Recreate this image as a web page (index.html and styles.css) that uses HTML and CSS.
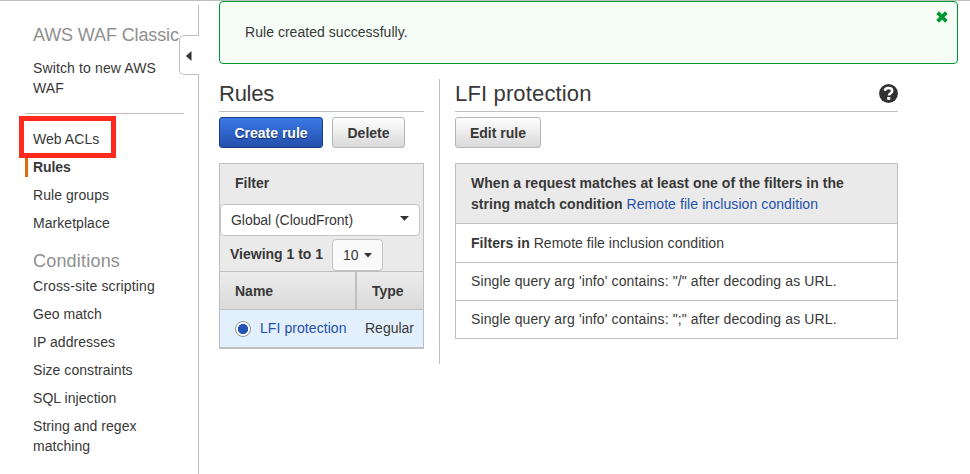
FILE: index.html
```html
<!DOCTYPE html>
<html lang="en">
<head>
<meta charset="utf-8">
<title>AWS WAF Classic - Rules</title>
<link rel="stylesheet" href="styles.css">
</head>
<body>
<div class="app">
  <aside class="sidebar">
    <h2 class="side-title">AWS WAF Classic</h2>
    <a class="switch">Switch to new AWS<br>WAF</a>
    <nav class="nav">
      <a class="marked">Web ACLs</a>
      <a class="active">Rules</a>
      <a>Rule groups</a>
      <a>Marketplace</a>
    </nav>
    <h2 class="side-sub">Conditions</h2>
    <nav class="nav-conditions">
      <a class="wide">Cross-site scripting</a>
      <a>Geo match</a>
      <a>IP addresses</a>
      <a>Size constraints</a>
      <a>SQL injection</a>
      <a>String and regex<br>matching</a>
    </nav>
    <div class="handle"><svg width="6" height="10" viewBox="0 0 6 10"><path d="M5.5 0v10L0 5z" fill="#333"/></svg></div>
  </aside>
  <main class="main">
    <div class="alert"><span>Rule created successfully.</span>
      <svg class="close" width="12" height="12" viewBox="0 0 12 12"><path d="M3 3l6 6M9 3L3 9" stroke="#009733" stroke-width="3.8" stroke-linecap="square"/></svg>
    </div>
    <div class="columns">
      <section class="rules">
        <header class="heading"><h1 class="list-title">Rules</h1></header>
        <div class="actions"><button class="btn primary create">Create rule</button><button class="btn delete">Delete</button></div>
        <div class="panel">
          <div class="filter-label">Filter</div>
          <div class="select region"><span>Global (CloudFront)</span><svg width="9" height="5" viewBox="0 0 9 5"><path d="M0 0h9L4.5 4.8z" fill="#333"/></svg></div>
          <div class="viewing"><b>Viewing 1 to 1</b><div class="select count"><span>10</span><svg width="8" height="5" viewBox="0 0 8 5"><path d="M0 0h8L4 4.5z" fill="#333"/></svg></div></div>
          <div class="row head"><div class="name">Name</div><div class="type">Type</div></div>
          <div class="row item"><div class="name"><i class="radio"></i><a>LFI protection</a></div><div class="type">Regular</div></div>
        </div>
      </section>
      <section class="detail">
        <header class="heading"><h1 class="detail-title">LFI protection</h1>
          <svg class="help" width="19" height="19" viewBox="0 0 19 19"><circle cx="9.5" cy="9.5" r="9.4" fill="#333"/><path d="M5.8 6.8C6.1 4.9 7.5 4.1 9.5 4.1c2.2 0 3.7 1 3.7 2.8 0 2.2-3.1 2.3-3.3 4.6" fill="none" stroke="#fff" stroke-width="2.5"/><path d="M8.2 13h3.1v2.8H8.2z" fill="#fff"/></svg>
        </header>
        <div class="actions"><button class="btn edit">Edit rule</button></div>
        <div class="conditions">
          <div class="cond-head"><b>When a request matches at least one of the filters in the<br>string match condition</b> <a>Remote file inclusion condition</a></div>
          <div class="cond first"><b>Filters in</b> Remote file inclusion condition</div>
          <div class="cond">Single query arg 'info' contains: "/" after decoding as URL.</div>
          <div class="cond">Single query arg 'info' contains: ";" after decoding as URL.</div>
        </div>
      </section>
    </div>
  </main>
</div>
</body>
</html>
```
FILE: styles.css
```css
*, *::after { box-sizing: border-box; }
body {
  margin: 0;
  height: 474px;
  overflow: hidden;
  background: #fff;
  border-top: 1px solid #bfbfbf;
  color: #383838;
  font: 14px/20px "Liberation Sans", Arial, sans-serif;
}
h1, h2 { margin: 0; font-weight: 400; }
a { color: inherit; text-decoration: none; }
svg { display: block; flex: none; }

.app { display: flex; height: 473px; }
.sidebar {
  position: relative;
  width: 199px;
  margin-top: 4px;
  padding: 17px 14px 0 25px;
  border-right: 1px solid #bfbfbf;
}
.side-title, .side-sub {
  padding-left: 8px;
  color: #8f8f8f;
  font-size: 18px;
  line-height: 26px;
  white-space: nowrap;
}
.side-title { letter-spacing: -0.12px; }
.switch {
  display: block;
  width: 159px;
  height: 56px;
  margin-top: 10px;
  padding-left: 8px;
  border-bottom: 1px solid #bfbfbf;
  letter-spacing: 0.13px;
}
.nav, .nav-conditions { display: flex; flex-direction: column; gap: 8px; }
.nav { margin-top: 15px; letter-spacing: 0.05px; }
.nav a, .nav-conditions a { padding-left: 8px; }
.nav .active {
  padding-left: 5px;
  border-left: 3px solid #dd6b10;
  font-weight: 700;
  letter-spacing: -0.1px;
}
.marked { position: relative; }
.marked::after {
  content: "";
  position: absolute;
  left: -6px;
  top: -13px;
  width: 97px;
  height: 42px;
  border: 5px solid #ff2a1d;
}
.side-sub { margin-top: 15px; letter-spacing: 0.2px; }
.nav-conditions { margin-top: 2px; letter-spacing: 0.05px; }
.nav-conditions .wide { letter-spacing: 0.14px; }
.handle {
  position: absolute;
  right: -1px;
  top: 30px;
  width: 20px;
  height: 40px;
  padding: 15px 0 0 6px;
  border: 1px solid #bfbfbf;
  border-right: 0;
  border-radius: 5px 0 0 5px;
  background: #fff;
}

.main { width: 739px; margin-left: 20px; }
.alert {
  display: flex;
  justify-content: space-between;
  height: 63px;
  padding: 20px 9px 0 25px;
  border: 1px solid #009733;
  border-radius: 4px;
  background: #f5fdf6;
  letter-spacing: 0.04px;
}
.close { margin-top: -11px; }
.columns { display: flex; margin-top: 15px; }
.rules { width: 221px; height: 285px; padding-right: 15px; border-right: 1px solid #bfbfbf; }
.detail { width: 443px; margin-left: 15px; }
.heading {
  display: flex;
  justify-content: space-between;
  height: 33px;
  border-bottom: 1px solid #bfbfbf;
}
.heading h1 { font-size: 22px; line-height: 29px; }
.list-title { letter-spacing: -0.25px; }
.detail-title { letter-spacing: 0.15px; }
.help { margin-top: 5px; }
.actions { display: flex; gap: 9px; margin-top: 5px; }
.btn {
  height: 31px;
  padding: 0;
  border: 1px solid #b5b5b5;
  border-radius: 3px;
  background: linear-gradient(#fff, #d9d9d9);
  color: #383838;
  font: 700 14px/20px "Liberation Sans", Arial, sans-serif;
}
.primary {
  border-color: #1a3f86;
  background: linear-gradient(#3a78e5, #2450ac);
  color: #fff;
  text-shadow: 0 1px 1px #112c61;
}
.create { width: 104px; }
.delete { width: 73px; }
.edit { width: 86px; }

.panel {
  height: 186px;
  margin-top: 15px;
  border: 1px solid #bfbfbf;
  border-bottom-width: 2px;
  background: #eaeaea;
}
.filter-label { height: 40px; padding: 9px 0 0 15px; font-weight: 700; }
.select {
  display: flex;
  align-items: center;
  height: 32px;
  border: 1px solid #c4c4c4;
  border-radius: 4px;
  background: #fff;
}
.region { width: 200px; justify-content: space-between; padding: 0 10px; letter-spacing: -0.05px; }
.region svg { margin-top: -3px; }
.viewing { display: flex; height: 35px; padding: 3px 0 0 10px; }
.viewing b { width: 102px; padding-top: 5px; }
.count { width: 51px; padding-left: 10px; gap: 5px; background: #fafafa; }
.row { display: flex; height: 38px; line-height: 37px; border-top: 1px solid #bfbfbf; }
.head { background: linear-gradient(#ececec, #dadada); font-weight: 700; line-height: 39px; }
.name { width: 135px; padding-left: 15px; }
.head .name { width: 137px; border-right: 2px solid #bfbfbf; }
.head .type { padding-left: 15px; }
.item { background: #e2effc; }
.item .name { display: flex; align-items: center; gap: 9px; letter-spacing: 0.07px; }
.item .type { padding-left: 10px; }
.item a, .cond-head a { color: #2450ad; }
.radio {
  width: 16px;
  height: 16px;
  border: 1px solid #929292;
  border-radius: 50%;
  background: radial-gradient(circle, #2453b3 4.8px, #fff 5.4px);
}

.conditions { margin-top: 15px; border: 1px solid #bfbfbf; }
.cond-head { height: 59px; padding: 9px 15px; background: #eaeaea; line-height: 21px; letter-spacing: 0.03px; }
.cond-head a { letter-spacing: 0.08px; }
.cond { height: 38px; padding-left: 15px; border-top: 1px solid #bfbfbf; line-height: 37px; letter-spacing: 0.12px; }
.cond.first { height: 39px; line-height: 39px; letter-spacing: 0.04px; }
```
